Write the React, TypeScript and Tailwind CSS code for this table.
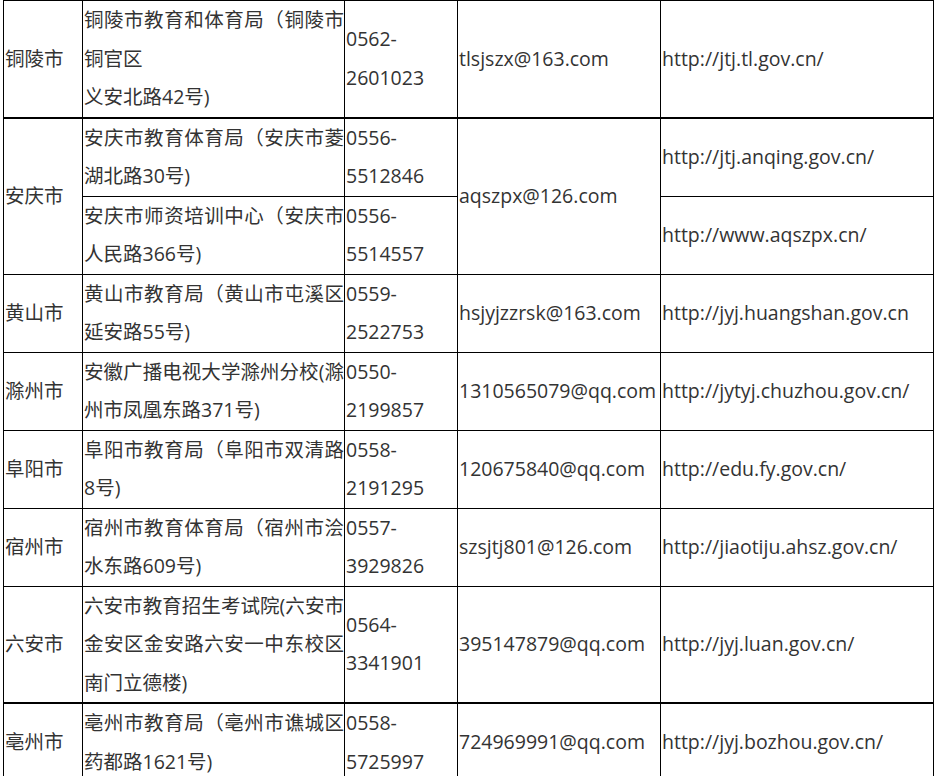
import React from 'react';

type Row = {
  city?: string;
  cityRows?: number;
  org: string[];
  phone: [string, string];
  email?: string;
  emailRows?: number;
  site: string;
  thick?: boolean;
};

const ROWS: Row[] = [
  {
    city: '铜陵市',
    org: ['铜陵市教育和体育局（铜陵市', '铜官区', '义安北路42号)'],
    phone: ['0562-', '2601023'],
    email: 'tlsjszx@163.com',
    site: 'http://jtj.tl.gov.cn/',
  },
  {
    city: '安庆市',
    cityRows: 2,
    org: ['安庆市教育体育局（安庆市菱', '湖北路30号)'],
    phone: ['0556-', '5512846'],
    email: 'aqszpx@126.com',
    emailRows: 2,
    site: 'http://jtj.anqing.gov.cn/',
    thick: true,
  },
  {
    org: ['安庆市师资培训中心（安庆市', '人民路366号)'],
    phone: ['0556-', '5514557'],
    site: 'http://www.aqszpx.cn/',
  },
  {
    city: '黄山市',
    org: ['黄山市教育局（黄山市屯溪区', '延安路55号)'],
    phone: ['0559-', '2522753'],
    email: 'hsjyjzzrsk@163.com',
    site: 'http://jyj.huangshan.gov.cn',
  },
  {
    city: '滁州市',
    org: ['安徽广播电视大学滁州分校(滁', '州市凤凰东路371号)'],
    phone: ['0550-', '2199857'],
    email: '1310565079@qq.com',
    site: 'http://jytyj.chuzhou.gov.cn/',
  },
  {
    city: '阜阳市',
    org: ['阜阳市教育局（阜阳市双清路', '8号)'],
    phone: ['0558-', '2191295'],
    email: '120675840@qq.com',
    site: 'http://edu.fy.gov.cn/',
  },
  {
    city: '宿州市',
    org: ['宿州市教育体育局（宿州市浍', '水东路609号)'],
    phone: ['0557-', '3929826'],
    email: 'szsjtj801@126.com',
    site: 'http://jiaotiju.ahsz.gov.cn/',
  },
  {
    city: '六安市',
    org: ['六安市教育招生考试院(六安市', '金安区金安路六安一中东校区', '南门立德楼)'],
    phone: ['0564-', '3341901'],
    email: '395147879@qq.com',
    site: 'http://jyj.luan.gov.cn/',
  },
  {
    city: '亳州市',
    org: ['亳州市教育局（亳州市谯城区', '药都路1621号)'],
    phone: ['0558-', '5725997'],
    email: '724969991@qq.com',
    site: 'http://jyj.bozhou.gov.cn/',
    thick: true,
  },
];

export default function App() {
  return (
    <div className="min-h-screen overflow-hidden bg-white pl-[3px] font-['Open_Sans','Noto_Sans_CJK_SC',sans-serif] text-[19.5px] leading-[38.5px] text-[#333]">
      <table className="w-[930px] table-fixed border-collapse">
        <colgroup>
          <col className="w-[79px]" />
          <col className="w-[262px]" />
          <col className="w-[113px]" />
          <col className="w-[203px]" />
          <col className="w-[273px]" />
        </colgroup>
        <tbody>
          {ROWS.map((row, i) => {
            const cell = row.thick
              ? 'border border-t-2 border-black pl-px align-middle'
              : 'border border-black pl-px align-middle';
            return (
              <tr key={i}>
                {row.city && (
                  <td rowSpan={row.cityRows ?? 1} className={`${cell} whitespace-nowrap`}>
                    {row.city}
                  </td>
                )}
                <td className={cell}>
                  {row.org.map((line, j) => (
                    <span
                      key={j}
                      className={
                        line.length >= 13
                          ? 'block whitespace-nowrap text-justify [text-align-last:justify]'
                          : 'block whitespace-nowrap'
                      }
                    >
                      {line}
                    </span>
                  ))}
                </td>
                <td className={`${cell} whitespace-nowrap`}>
                  {row.phone[0]}
                  <br />
                  {row.phone[1]}
                </td>
                {row.email && (
                  <td rowSpan={row.emailRows ?? 1} className={`${cell} whitespace-nowrap pl-[2px]`}>
                    {row.email}
                  </td>
                )}
                <td className={`${cell} whitespace-nowrap pl-[2px]`}>{row.site}</td>
              </tr>
            );
          })}
        </tbody>
      </table>
    </div>
  );
}
